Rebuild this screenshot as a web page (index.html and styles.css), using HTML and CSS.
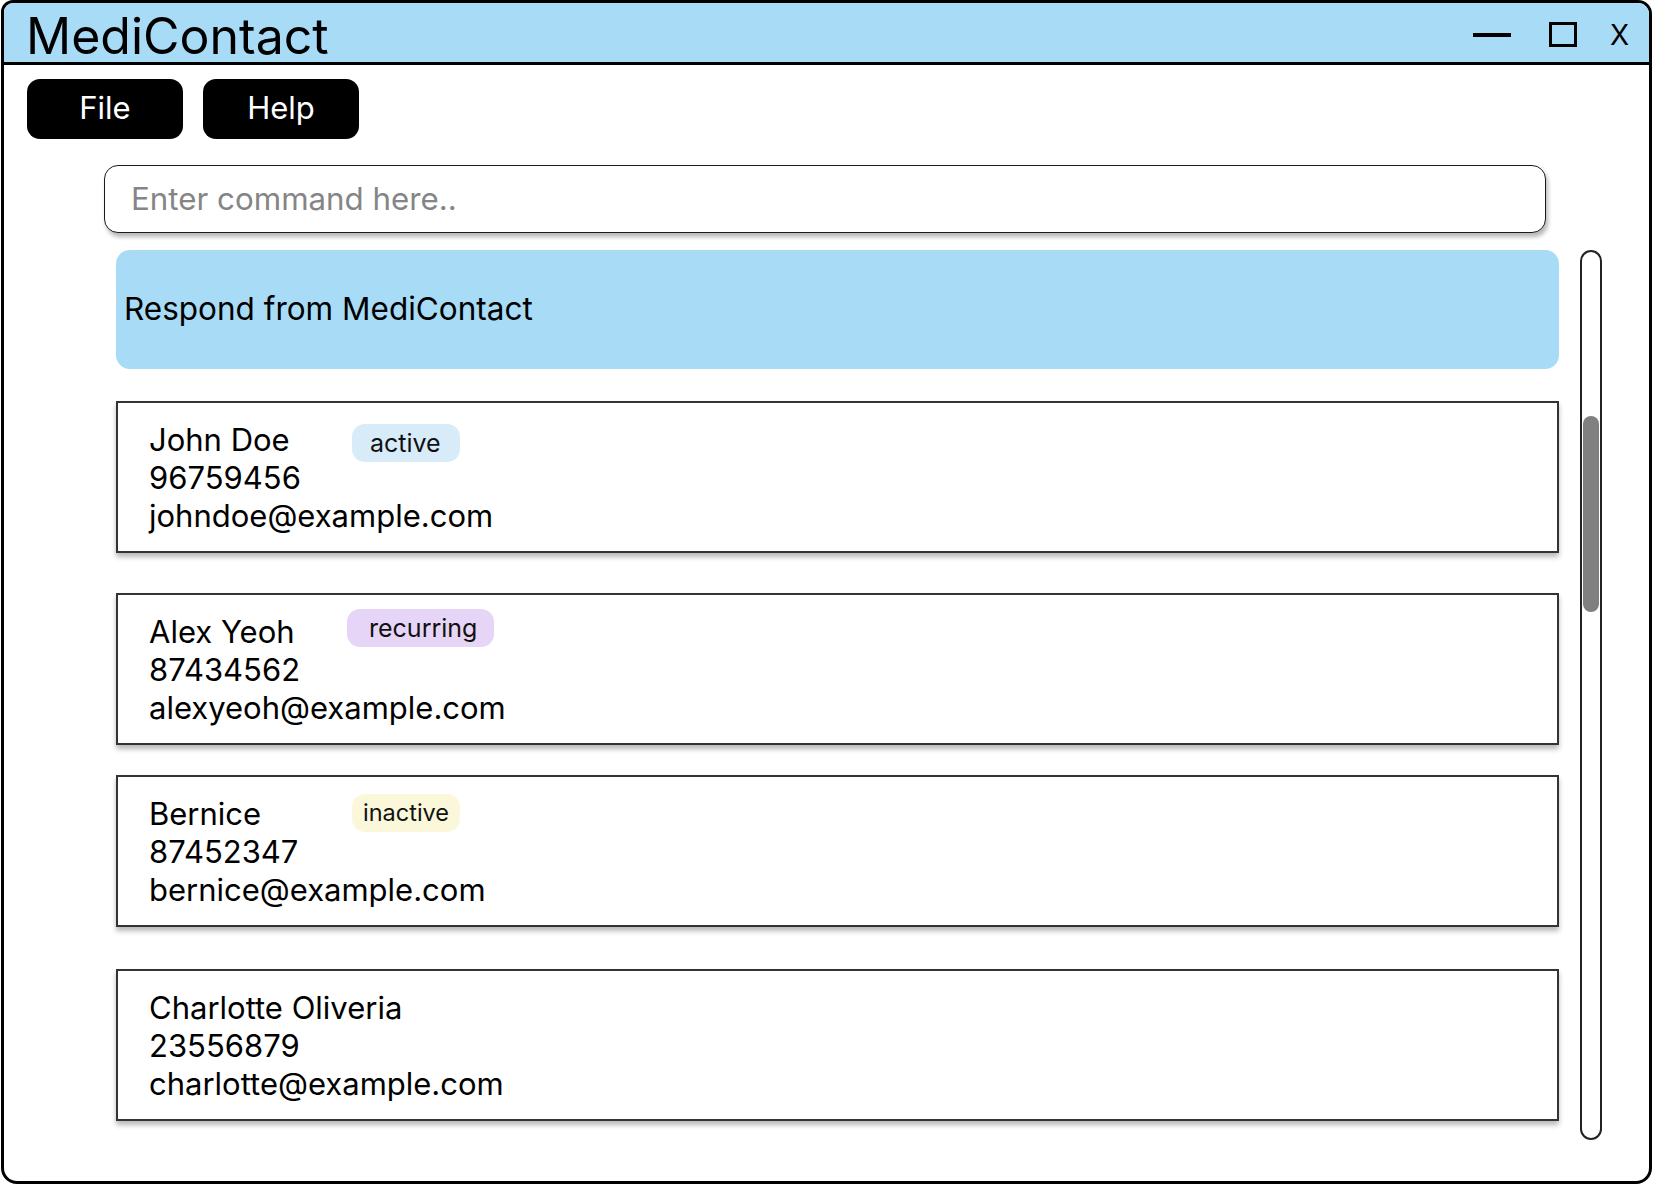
FILE: index.html
```html
<!DOCTYPE html>
<html lang="en">
<head>
<meta charset="utf-8">
<title>MediContact</title>
<link rel="stylesheet" href="styles.css">
</head>
<body>
<div class="window">
  <header class="titlebar">
    <h1 class="app-title">MediContact</h1>
    <div class="win-controls">
      <span class="ctl-min"></span>
      <span class="ctl-max"></span>
      <span class="ctl-close">X</span>
    </div>
  </header>
  <nav class="menubar">
    <button class="menu-btn">File</button>
    <button class="menu-btn">Help</button>
  </nav>
  <div class="command">
    <input class="command-input" type="text" placeholder="Enter command here..">
  </div>
  <div class="content">
    <div class="list">
      <div class="response">Respond from MediContact</div>
      <div class="card card-first">
        <div class="name-row"><span class="name">John Doe</span><span class="tag tag-active">active</span></div>
        <div class="line">96759456</div>
        <div class="line">johndoe@example.com</div>
      </div>
      <div class="card card-gap-lg">
        <div class="name-row"><span class="name">Alex Yeoh</span><span class="tag tag-recurring">recurring</span></div>
        <div class="line">87434562</div>
        <div class="line">alexyeoh@example.com</div>
      </div>
      <div class="card card-gap-sm">
        <div class="name-row"><span class="name">Bernice</span><span class="tag tag-inactive">inactive</span></div>
        <div class="line">87452347</div>
        <div class="line">bernice@example.com</div>
      </div>
      <div class="card card-gap-xl">
        <div class="name-row"><span class="name">Charlotte Oliveria</span></div>
        <div class="line">23556879</div>
        <div class="line">charlotte@example.com</div>
      </div>
    </div>
    <div class="scrollbar"><div class="scroll-thumb"></div></div>
  </div>
</div>
</body>
</html>
```
FILE: styles.css
```css
* { box-sizing: border-box; }
html, body { margin: 0; padding: 0; background: #fff; }
body { font-family: Inter, "Noto Sans", "Liberation Sans", sans-serif; color: #000; }

.window {
  margin-left: 1px;
  width: 1651px;
  height: 1184px;
  border: 3px solid #000;
  border-radius: 12px 14px 16px 16px;
  overflow: hidden;
  background: #fff;
}

.titlebar {
  height: 62px;
  background: #a8dbf5;
  border-bottom: 3px solid #000;
  display: flex;
  align-items: center;
  justify-content: space-between;
  padding: 0 0 0 22px;
}
.app-title {
  margin: 0;
  font-size: 50px;
  font-weight: 400;
  line-height: 1;
  padding-top: 7px;
}
.win-controls {
  display: flex;
  align-items: center;
  height: 100%;
}
.ctl-min {
  width: 38px;
  height: 4px;
  background: #000;
  margin-top: 4px;
}
.ctl-max {
  width: 28px;
  height: 25px;
  border: 3px solid #000;
  margin-left: 38px;
  margin-top: 3px;
}
.ctl-close {
  font-size: 28px;
  line-height: 1;
  margin-left: 33px;
  margin-right: 20px;
  margin-top: 4px;
}

.menubar {
  display: flex;
  gap: 20px;
  padding: 14px 0 0 23px;
}
.menu-btn {
  width: 156px;
  height: 60px;
  background: #000;
  color: #fff;
  border: none;
  border-radius: 13px;
  font-family: inherit;
  font-size: 31px;
  padding: 0 0 4px 0;
}

.command {
  margin: 26px 0 0 100px;
  width: 1442px;
}
.command-input {
  display: block;
  width: 100%;
  height: 68px;
  border: 1.5px solid #1a1a1a;
  border-radius: 14px;
  box-shadow: 2px 4px 4px rgba(0, 0, 0, 0.28);
  padding: 0 0 0 26px;
  font-family: inherit;
  font-size: 31.3px;
  color: #000;
  background: #fff;
  outline: none;
}
.command-input::placeholder { color: #858585; }

.content {
  display: flex;
  align-items: flex-start;
  margin-top: 17px;
}
.list {
  margin-left: 112px;
  width: 1443px;
  display: flex;
  flex-direction: column;
}
.response {
  height: 119px;
  background: #a8dbf5;
  border-radius: 14px;
  display: flex;
  align-items: center;
  padding: 0 0 2px 8px;
  font-size: 31.5px;
}

.card {
  height: 152px;
  border: 2px solid #333;
  background: #fff;
  box-shadow: 0 4px 5px rgba(0, 0, 0, 0.28);
  padding: 18px 0 0 31px;
  font-size: 31px;
  line-height: 38px;
}
.card-first { margin-top: 32px; }
.card-gap-lg { margin-top: 40px; }
.card-gap-sm { margin-top: 30px; }
.card-gap-xl { margin-top: 42px; }

.name-row {
  display: flex;
  align-items: flex-start;
  height: 38px;
}
.name {
  min-width: 202px;
  white-space: nowrap;
}
.tag {
  display: inline-block;
  height: 38px;
  line-height: 38px;
  border-radius: 13px;
  font-size: 25px;
  color: #111;
  white-space: nowrap;
}
.tag-active { background: #d7ebf9; padding: 0 19px 0 18px; margin-top: 3px; margin-left: 1px; }
.tag-recurring { background: #e6d5f7; padding: 0 17px 0 22px; margin-left: -4px; margin-top: -4px; }
.tag-inactive { background: #fbf7da; padding: 0 11px 0 11px; margin-top: -1px; margin-left: 1px; font-size: 23.5px; }

.scrollbar {
  margin-left: 21px;
  width: 22px;
  height: 890px;
  border: 2px solid #222;
  border-radius: 11px;
  padding: 164px 1px 0 1px;
}
.scroll-thumb {
  height: 196px;
  background: #808080;
  border-radius: 9px;
}
```
